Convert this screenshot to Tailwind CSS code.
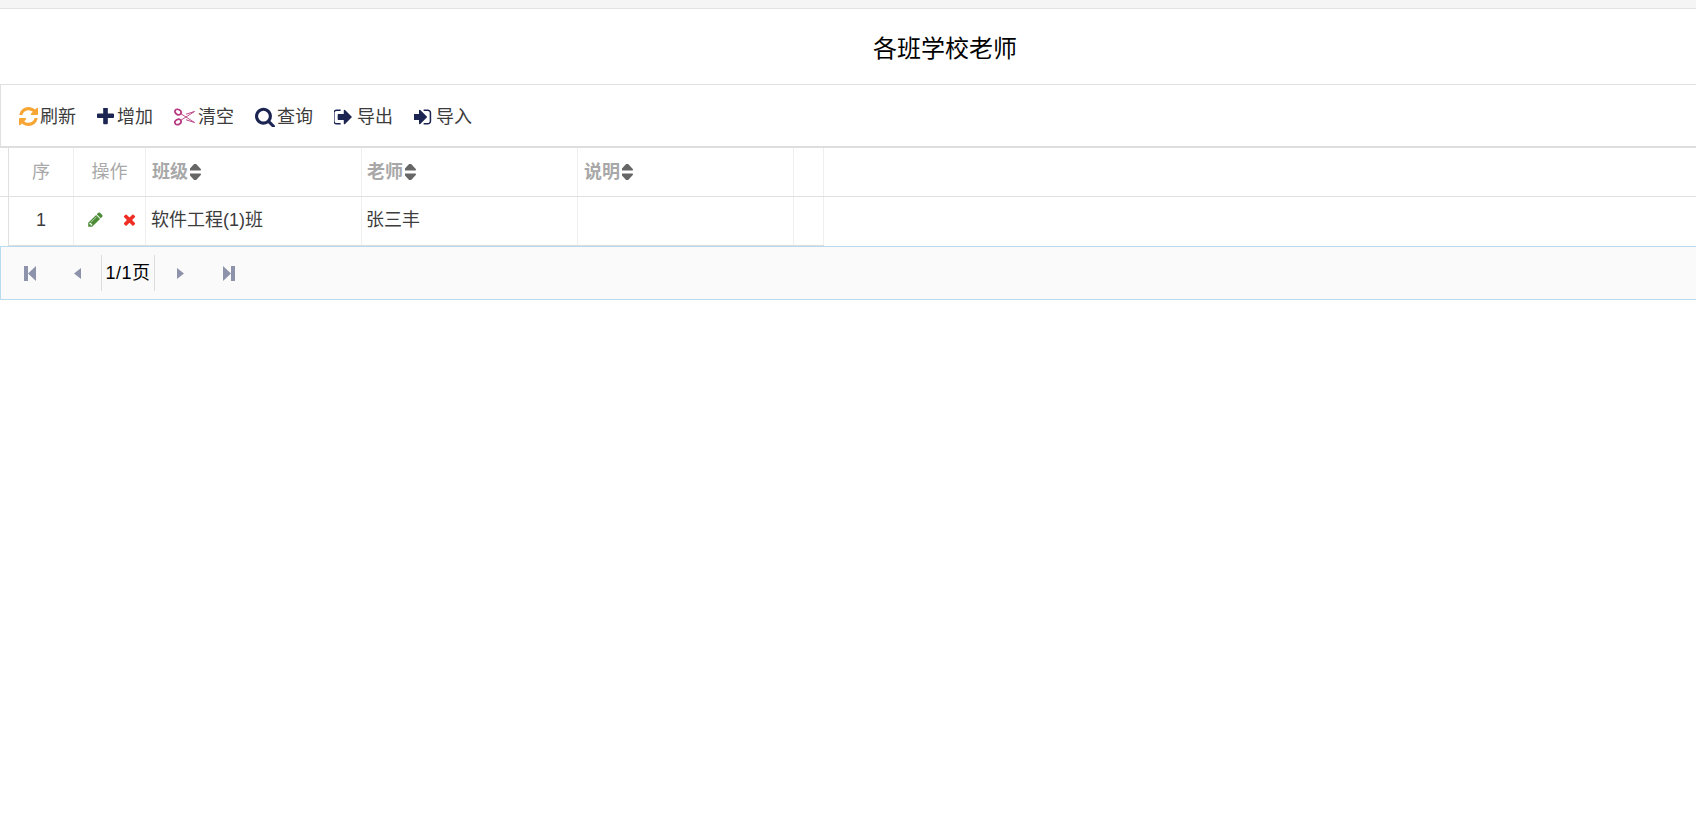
<!DOCTYPE html>
<html lang="zh-CN">
<head>
  <meta charset="UTF-8">
  <title>各班学校老师</title>
  <script src="https://cdn.jsdelivr.net/npm/@tailwindcss/browser@4"></script>
</head>
<body class="bg-white h-[835px] overflow-hidden font-['Liberation_Sans','Noto_Sans_CJK_SC',sans-serif] text-[18px] text-[#3c3c3c]">

  <!-- top strip -->
  <div class="h-[9px] bg-[#f5f5f5] border-b border-[#e3e3e3]"></div>

  <!-- title -->
  <div class="h-[75px] flex items-center justify-center pl-[194px] pt-[4px] text-[24px] text-black">各班学校老师</div>

  <!-- toolbar -->
  <div class="h-[64px] flex items-center border-t border-l border-b-2 border-t-[#e0e0e0] border-l-[#e0e0e0] border-b-[#dedede] pl-[18px] pt-[2px] leading-none">
    <a class="flex items-center w-[78px]">
      <svg class="w-[19px] h-[19px] mr-[2px]" viewBox="128 128 1536 1536" fill="#f7a535"><path d="M1639 1056q0 5-1 7-64 268-268 434.5t-478 166.5q-146 0-282.5-55t-243.5-157l-129 129q-19 19-45 19t-45-19-19-45v-448q0-26 19-45t45-19h448q26 0 45 19t19 45-19 45l-137 137q71 66 161 102t187 36q134 0 250-65t186-179q11-17 53-117 8-23 30-23h192q13 0 22.5 9.5t9.5 22.5zm25-800v448q0 26-19 45t-45 19h-448q-26 0-45-19t-19-45 19-45l138-138q-148-137-349-137-134 0-250 65t-186 179q-11 17-53 117-8 23-30 23h-199q-13 0-22.5-9.5t-9.5-22.5v-7q65-268 270-434.5t480-166.5q146 0 284 55.5t245 156.5l130-129q19-19 45-19t45 19 19 45z"/></svg>
      <span>刷新</span>
    </a>
    <a class="flex items-center w-[77px]">
      <svg class="w-[17px] h-[17px] mr-[3px]" viewBox="192 192 1408 1408" fill="#1c2452"><path d="M1600 736v192q0 40-28 68t-68 28h-416v416q0 40-28 68t-68 28h-192q-40 0-68-28t-28-68v-416h-416q-40 0-68-28t-28-68v-192q0-40 28-68t68-28h416v-416q0-40 28-68t68-28h192q40 0 68 28t28 68v416h416q40 0 68 28t28 68z"/></svg>
      <span>增加</span>
    </a>
    <a class="flex items-center w-[81px]">
      <svg class="w-[21px] h-[18px] mr-[3px]" viewBox="0 0 21 18" fill="none" stroke="#b8397f"><ellipse cx="4" cy="4" rx="3.200" ry="2.500" transform="rotate(30 4 4)" stroke-width="1.800"/><ellipse cx="4" cy="14" rx="3.200" ry="2.500" transform="rotate(-30 4 14)" stroke-width="1.800"/><path d="M6.500 5.500 20.500 14.500 12 11.800M6.500 12.500 20.500 3.500 12 6.200" stroke-width="0.900"/></svg>
      <span>清空</span>
    </a>
    <a class="flex items-center w-[79px]">
      <svg class="w-[20px] h-[20px] mr-[2px]" viewBox="64 64 1664 1664" fill="#1c2452"><path d="M1216 832q0-185-131.5-316.5t-316.500-131.500-316.500 131.500-131.500 316.500 131.500 316.500 316.500 131.500 316.500-131.500 131.500-316.500zm512 832q0 52-38 90t-90 38q-54 0-90-38l-343-342q-179 124-399 124-143 0-273.500-55.500t-225-150-150-225-55.500-273.500 55.500-273.500 150-225 225-150 273.500-55.500 273.500 55.500 225 150 150 225 55.500 273.500q0 220-124 399l343 343q37 37 37 90z"/></svg>
      <span>查询</span>
    </a>
    <a class="flex items-center w-[80px]">
      <svg class="w-[18px] h-[16px] mr-[5px]" viewBox="160 224 1472 1344" fill="#1c2452"><path d="M704 1440q0 4 1 20t.5 26.5-3 23.5-10 19.5-20.5 6.5h-320q-119 0-203.500-84.500t-84.500-203.500v-704q0-119 84.500-203.500t203.500-84.500h320q13 0 22.500 9.500t9.500 22.500q0 4 1 20t.5 26.5-3 23.500-10 19.500-20.500 6.500h-320q-66 0-113 47t-47 113v704q0 66 47 113t113 47h312l11.500 1 11.500 3 8 5.500 7 9 2 13.500zm928-544q0 26-19 45l-544 544q-19 19-45 19t-45-19-19-45v-288h-448q-26 0-45-19t-19-45v-384q0-26 19-45t45-19h448v-288q0-26 19-45t45-19 45 19l544 544q19 19 19 45z"/></svg>
      <span>导出</span>
    </a>
    <a class="flex items-center">
      <svg class="w-[18px] h-[16px] mr-[4px]" viewBox="160 224 1376 1344" fill="#1c2452"><path d="M1184 896q0 26-19 45l-544 544q-19 19-45 19t-45-19-19-45v-288h-448q-26 0-45-19t-19-45v-384q0-26 19-45t45-19h448v-288q0-26 19-45t45-19 45 19l544 544q19 19 19 45zm352-352v704q0 119-84.500 203.500t-203.500 84.500h-320q-13 0-22.500-9.500t-9.500-22.500q0-4-1-20t-.5-26.500 3-23.500 10-19.500 20.500-6.500h320q66 0 113-47t47-113v-704q0-66-47-113t-113-47h-312l-11.500-1-11.500-3-8-5.500-7-9-2-13.500q0-4-1-20t-.5-26.500 3-23.500 10-19.500 20.500-6.500h320q119 0 203.500 84.500t84.500 203.500z"/></svg>
      <span>导入</span>
    </a>
  </div>

  <!-- header row -->
  <div class="h-[49px] pl-[8px] flex border-b border-[#e0e0e0] text-[#a8a8a8]">
    <div class="w-[66px] border-l border-r border-l-[#e0e0e0] border-r-[#efefef] flex items-center justify-center">序</div>
    <div class="w-[72px] border-r border-[#efefef] flex items-center justify-center">操作</div>
    <div class="w-[216px] border-r border-[#efefef] flex items-center pl-[6px] font-bold">
      班级
      <svg class="w-[11px] h-[16px] ml-[2px]" viewBox="448 256 960 1280" preserveAspectRatio="none" fill="#666"><path d="M1408 1088q0 26-19 45l-448 448q-19 19-45 19t-45-19l-448-448q-19-19-19-45t19-45 45-19h896q26 0 45 19t19 45zm0-384q0 26-19 45t-45 19h-896q-26 0-45-19t-19-45 19-45l448-448q19-19 45-19t45 19l448 448q19 19 19 45z"/></svg>
    </div>
    <div class="w-[216px] border-r border-[#efefef] flex items-center pl-[5px] font-bold">
      老师
      <svg class="w-[11px] h-[16px] ml-[2px]" viewBox="448 256 960 1280" preserveAspectRatio="none" fill="#666"><path d="M1408 1088q0 26-19 45l-448 448q-19 19-45 19t-45-19l-448-448q-19-19-19-45t19-45 45-19h896q26 0 45 19t19 45zm0-384q0 26-19 45t-45 19h-896q-26 0-45-19t-19-45 19-45l448-448q19-19 45-19t45 19l448 448q19 19 19 45z"/></svg>
    </div>
    <div class="w-[216px] border-r border-[#efefef] flex items-center pl-[6px] font-bold">
      说明
      <svg class="w-[11px] h-[16px] ml-[2px]" viewBox="448 256 960 1280" preserveAspectRatio="none" fill="#666"><path d="M1408 1088q0 26-19 45l-448 448q-19 19-45 19t-45-19l-448-448q-19-19-19-45t19-45 45-19h896q26 0 45 19t19 45zm0-384q0 26-19 45t-45 19h-896q-26 0-45-19t-19-45 19-45l448-448q19-19 45-19t45 19l448 448q19 19 19 45z"/></svg>
    </div>
    <div class="w-[30px] border-r border-[#efefef]"></div>
  </div>

  <!-- data row -->
  <div class="h-[49px] pl-[8px] flex">
    <div class="flex border-b border-[#dcdcdc]">
      <div class="w-[66px] border-l border-r border-l-[#e0e0e0] border-r-[#efefef] flex items-center justify-center pb-[1px]">1</div>
      <div class="w-[72px] border-r border-[#efefef] flex items-center pl-[13px] pb-[3px]">
        <svg class="w-[17px] h-[17px]" viewBox="0 0 1792 1792" fill="#4d8c36"><path d="M491 1536l91-91-235-235-91 91v107h128v128h107zm523-928q0-22-22-22-10 0-17 7l-542 542q-7 7-7 17 0 22 22 22 10 0 17-7l542-542q7-7 7-17zm-54-192l416 416-832 832h-416v-416zm683 96q0 53-37 90l-166 166-416-416 166-165q36-38 90-38 53 0 91 38l235 234q37 39 37 91z"/></svg>
        <svg class="w-[17px] h-[17px] ml-[17px]" viewBox="0 0 1792 1792" fill="#ee2e24"><path d="M1490 1322q0 40-28 68l-136 136q-28 28-68 28t-68-28l-294-294-294 294q-28 28-68 28t-68-28l-136-136q-28-28-28-68t28-68l294-294-294-294q-28-28-28-68t28-68l136-136q28-28 68-28t68 28l294 294 294-294q28-28 68-28t68 28l136 136q28 28 28 68t-28 68l-294 294 294 294q28 28 28 68z"/></svg>
      </div>
      <div class="w-[216px] border-r border-[#efefef] flex items-center pl-[5px] pb-[1px]">软件工程(1)班</div>
      <div class="w-[216px] border-r border-[#efefef] flex items-center pl-[4px] pb-[1px]">张三丰</div>
      <div class="w-[216px] border-r border-[#efefef]"></div>
      <div class="w-[30px] border-r border-[#efefef]"></div>
    </div>
  </div>

  <!-- pager -->
  <div class="h-[54px] flex items-center border-y border-l border-[#b8dcee] bg-[#fafafa] text-black">
    <div class="w-[100px] flex items-center">
      <svg class="ml-[23px] w-[12px] h-[15px]" viewBox="0 0 12 15" fill="#8e93ac"><path d="M0 0h4v15H0zM4 7.500 12 0v15z"/></svg>
      <svg class="ml-[38px] w-[7px] h-[11px]" viewBox="0 0 7 11" fill="#8e93ac"><path d="M7 0v11L0 5.500z"/></svg>
    </div>
    <div class="h-[36px] w-[54px] border-x border-[#dcdcdc] flex items-center justify-center pt-[1px] tracking-[0.5px]">1/1页</div>
    <svg class="ml-[22px] w-[7px] h-[11px]" viewBox="0 0 7 11" fill="#8e93ac"><path d="M0 0v11l7-5.500z"/></svg>
    <svg class="ml-[39px] w-[12px] h-[15px]" viewBox="0 0 12 15" fill="#8e93ac"><path d="M12 0H8v15h4zM8 7.500 0 0v15z"/></svg>
  </div>

</body>
</html>
